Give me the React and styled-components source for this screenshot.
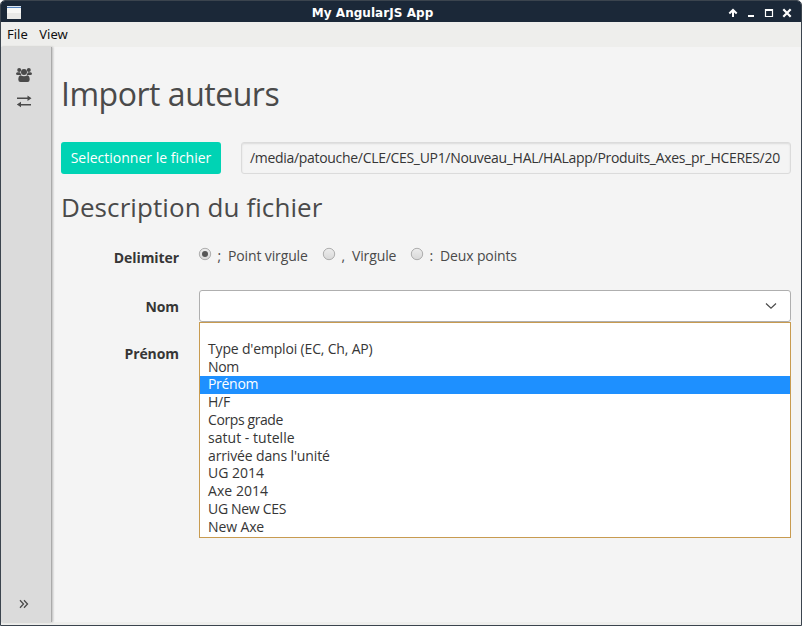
import React from 'react';
import styled, { createGlobalStyle } from 'styled-components';

const GlobalStyle = createGlobalStyle`
  *, *::before, *::after { box-sizing: border-box; }
  body { margin: 0; background: #fff; overflow: hidden; }
`;

const Window = styled.div`
  width: 802px;
  height: 626px;
  display: flex;
  flex-direction: column;
  border: 1px solid #3b444e;
  border-radius: 5px 5px 0 0;
  background: #eeeeec;
  overflow: hidden;
  font-family: "Open Sans", "Noto Sans", sans-serif;
  font-size: 14px;
  color: #363636;
`;

const TitleBar = styled.header`
  height: 21px;
  flex: none;
  display: grid;
  grid-template-columns: 26px 1fr 75px;
  align-items: center;
  background: #1b2838;
`;

const AppIcon = styled.svg`
  display: block;
  width: 14px;
  height: 13px;
  margin: 0 0 1px 6px;
`;

const WindowTitle = styled.div`
  padding: 2px 8px 0 0;
  text-align: center;
  font: bold 12px/21px "DejaVu Sans", sans-serif;
  letter-spacing: 0.05px;
  color: #fff;
  white-space: nowrap;
`;

const WindowControls = styled.svg`
  display: block;
  width: 75px;
  height: 21px;
`;

const MenuBar = styled.nav`
  height: 25px;
  flex: none;
  display: flex;
  gap: 11.500px;
  padding: 0 6px;
  background: #eeeeec;
`;

const MenuItem = styled.span`
  font-family: "Noto Sans", sans-serif;
  font-size: 13px;
  line-height: 25px;
  color: #101010;
`;

const Workspace = styled.div`
  height: 575px;
  flex: none;
  display: flex;
  background: #f4f4f4;
`;

const Sidebar = styled.aside`
  width: 51px;
  flex: none;
  display: flex;
  flex-direction: column;
  justify-content: space-between;
  padding: 20px 0 10px 15px;
  background: #dbdbdb;
  border-right: 1px solid #aaa;
  box-shadow: 1px 0 2px rgba(10, 10, 10, 0.25);
`;

const SideLinks = styled.div`
  display: flex;
  flex-direction: column;
  gap: 10px;
`;

const SideIcon = styled.svg`
  display: block;
  width: 16px;
  height: 16px;
  fill: #4a4a4a;
`;

const Main = styled.main`
  flex: 1;
  min-width: 0;
  padding: 24px 10px 0 9px;
`;

const Title = styled.h1`
  margin: 0;
  height: 71px;
  font-size: 32px;
  font-weight: 400;
  line-height: 45px;
  letter-spacing: -0.48px;
  color: #4a4a4a;
`;

const Subtitle = styled.h2`
  margin: 14px 0 0;
  height: 39px;
  font-size: 26px;
  font-weight: 400;
  line-height: 38px;
  letter-spacing: 0.08px;
  color: #4a4a4a;
`;

const FileRow = styled.div`
  display: flex;
  gap: 20px;
`;

const FileButton = styled.button`
  width: 160px;
  height: 32px;
  padding: 0 0 2px;
  border: 0;
  border-radius: 3px;
  background: #00d3b4;
  color: #fff;
  font: inherit;
`;

const PathField = styled.div`
  width: 550px;
  height: 32px;
  padding: 0 8px;
  border: 1px solid #dbdbdb;
  border-radius: 3px;
  background: #f4f4f4;
  box-shadow: inset 0 1px 2px rgba(10, 10, 10, 0.1);
  line-height: 30px;
  letter-spacing: -0.308px;
  white-space: nowrap;
  overflow: hidden;
`;

const Form = styled.div`
  display: grid;
  grid-template-columns: 118px 592px;
  grid-template-rows: 63px 49px 47px;
  column-gap: 20px;
`;

const FieldLabel = styled.label`
  padding-top: ${(p) => p.$top}px;
  font-weight: 700;
  line-height: 20px;
  letter-spacing: -0.08px;
  text-align: right;
`;

const RadioGroup = styled.div`
  display: flex;
  padding-top: 19px;
  color: #4a4a4a;
`;

const RadioOption = styled.label`
  display: flex;
  width: ${(p) => p.$width}px;
  line-height: 20px;
  white-space: pre;
`;

const RadioDot = styled.svg`
  width: 14px;
  height: 14px;
  flex: none;
  margin: 1px 0 0 -1px;
`;

const Separator = styled.span`
  width: 16px;
  padding-left: 5.500px;
`;

const OptionText = styled.span`
  letter-spacing: -0.13px;
`;

const SelectWrap = styled.div`
  position: relative;
`;

const SelectBox = styled.div`
  height: 32px;
  display: flex;
  align-items: center;
  justify-content: flex-end;
  padding-right: 13px;
  border: 1px solid #afafaf;
  border-radius: 3px;
  background: #fff;
`;

const Chevron = styled.svg`
  width: 12px;
  height: 8px;
  fill: none;
  stroke: #4a4a4a;
  stroke-width: 1.2;
`;

const OptionList = styled.ul`
  position: absolute;
  top: 32px;
  left: 0;
  width: 592px;
  height: 216px;
  margin: 0;
  padding: 0;
  border: 1px solid #c89b50;
  background: #fff;
  list-style: none;
`;

const Option = styled.li`
  height: 17.8px;
  padding-left: 8px;
  line-height: 16px;
  letter-spacing: ${(p) => p.$spacing || 0}px;
  white-space: nowrap;
  background: ${(p) => (p.$selected ? '#1e90ff' : 'transparent')};
  color: ${(p) => (p.$selected ? '#fff' : '#363636')};
`;

const OPTIONS = [
  { text: '' },
  { text: "Type d'emploi (EC, Ch, AP)", spacing: -0.17 },
  { text: 'Nom', spacing: -0.3 },
  { text: 'Prénom', spacing: -0.3, selected: true },
  { text: 'H/F', spacing: -0.2 },
  { text: 'Corps grade', spacing: -0.4 },
  { text: 'satut - tutelle', spacing: 0.03 },
  { text: "arrivée dans l'unité", spacing: -0.14 },
  { text: 'UG 2014', spacing: 0 },
  { text: 'Axe 2014', spacing: 0.05 },
  { text: 'UG New CES', spacing: -0.32 },
  { text: 'New Axe', spacing: -0.12 },
];

const DELIMITERS = [
  { mark: ';', text: 'Point virgule', width: 124, checked: true },
  { mark: ',', text: 'Virgule', width: 88 },
  { mark: ':', text: 'Deux points', width: 110 },
];

function Radio({ checked }) {
  return (
    <RadioDot viewBox="0 0 14 14">
      <defs>
        <linearGradient id="radio-face" x1="0" y1="0" x2="0" y2="1">
          <stop offset="0" stopColor="#ededed" />
          <stop offset="1" stopColor="#d8d8d8" />
        </linearGradient>
      </defs>
      <circle cx="7" cy="7" r="5.7" fill="url(#radio-face)" stroke="#adadad" />
      {checked && <circle cx="7" cy="7" r="3" fill="#555" />}
    </RadioDot>
  );
}

export default function App() {
  return (
    <>
      <GlobalStyle />
      <Window>
        <TitleBar>
          <AppIcon viewBox="0 0 14 13">
            <rect width="14" height="13" rx="0.5" fill="#e9e9e7" />
            <rect width="14" height="1" fill="#dce6f2" />
            <rect y="1" width="14" height="1" fill="#5583bd" />
            <rect y="2" width="14" height="5" fill="#f7f7f5" />
          </AppIcon>
          <WindowTitle>My AngularJS App</WindowTitle>
          <WindowControls viewBox="0 0 75 21" fill="none" stroke="#fff" strokeWidth="2">
            <path d="M7 15V8.500M3.300 11.500 7 8l3.700 3.500" />
            <path d="M22 14h6" />
            <path d="M39.500 7.500h7v7h-7Z" strokeWidth="1.200" />
            <path d="M39 8h8" />
            <path d="M57.300 7.300l7.400 7.400M64.700 7.300l-7.400 7.400" strokeWidth="2.200" />
          </WindowControls>
        </TitleBar>
        <MenuBar>
          <MenuItem>File</MenuItem>
          <MenuItem>View</MenuItem>
        </MenuBar>
        <Workspace>
          <Sidebar>
            <SideLinks>
              <SideIcon viewBox="0 0 16 16">
                <circle cx="3.200" cy="3" r="2" />
                <circle cx="12.800" cy="3" r="2" />
                <path d="M1.500 5.200h2.200q1 .3 1 1.500l.7 1.300H1.700Q0 8 0 6.800 0 5.200 1.500 5.200ZM14.500 5.200h-2.200q-1 .3-1 1.500L10.600 8h3.700Q16 8 16 6.800q0-1.600-1.500-1.600Z" />
                <circle cx="8" cy="5" r="3" />
                <path d="M4.700 8.200Q6 9.200 8 9.200t3.300-1Q13.700 8.800 13.700 12.500q0 2.500-2.200 2.500h-7q-2.200 0-2.200-2.500 0-3.700 2.400-4.300Z" />
              </SideIcon>
              <SideIcon viewBox="0 0 16 16">
                <path d="M1 4.500h10.500V2.500L15.500 5.300l-4 2.700V6H1ZM15 12.500H5v1.800L.800 11.500l4.200-2.700V11h10Z" />
              </SideIcon>
            </SideLinks>
            <SideIcon viewBox="0 0 16 16">
              <path
                d="M4 4.300 7.500 8 4 11.700M8 4.300 11.500 8 8 11.700"
                fill="none"
                stroke="#4a4a4a"
                strokeWidth="1.300"
              />
            </SideIcon>
          </Sidebar>
          <Main>
            <Title>Import auteurs</Title>
            <FileRow>
              <FileButton>Selectionner le fichier</FileButton>
              <PathField>
                /media/patouche/CLE/CES_UP1/Nouveau_HAL/HALapp/Produits_Axes_pr_HCERES/20
              </PathField>
            </FileRow>
            <Subtitle>Description du fichier</Subtitle>
            <Form>
              <FieldLabel $top={21}>Delimiter</FieldLabel>
              <RadioGroup>
                {DELIMITERS.map((d) => (
                  <RadioOption key={d.text} $width={d.width}>
                    <Radio checked={d.checked} />
                    <Separator>{d.mark}</Separator>
                    <OptionText>{d.text}</OptionText>
                  </RadioOption>
                ))}
              </RadioGroup>
              <FieldLabel $top={7}>Nom</FieldLabel>
              <SelectWrap>
                <SelectBox>
                  <Chevron viewBox="0 0 12 8">
                    <path d="M1 1.500l5 4.700 5-4.700" />
                  </Chevron>
                </SelectBox>
                <OptionList>
                  {OPTIONS.map((o, i) => (
                    <Option key={i} $selected={o.selected} $spacing={o.spacing}>
                      {o.text}
                    </Option>
                  ))}
                </OptionList>
              </SelectWrap>
              <FieldLabel $top={5}>Prénom</FieldLabel>
            </Form>
          </Main>
        </Workspace>
      </Window>
    </>
  );
}
